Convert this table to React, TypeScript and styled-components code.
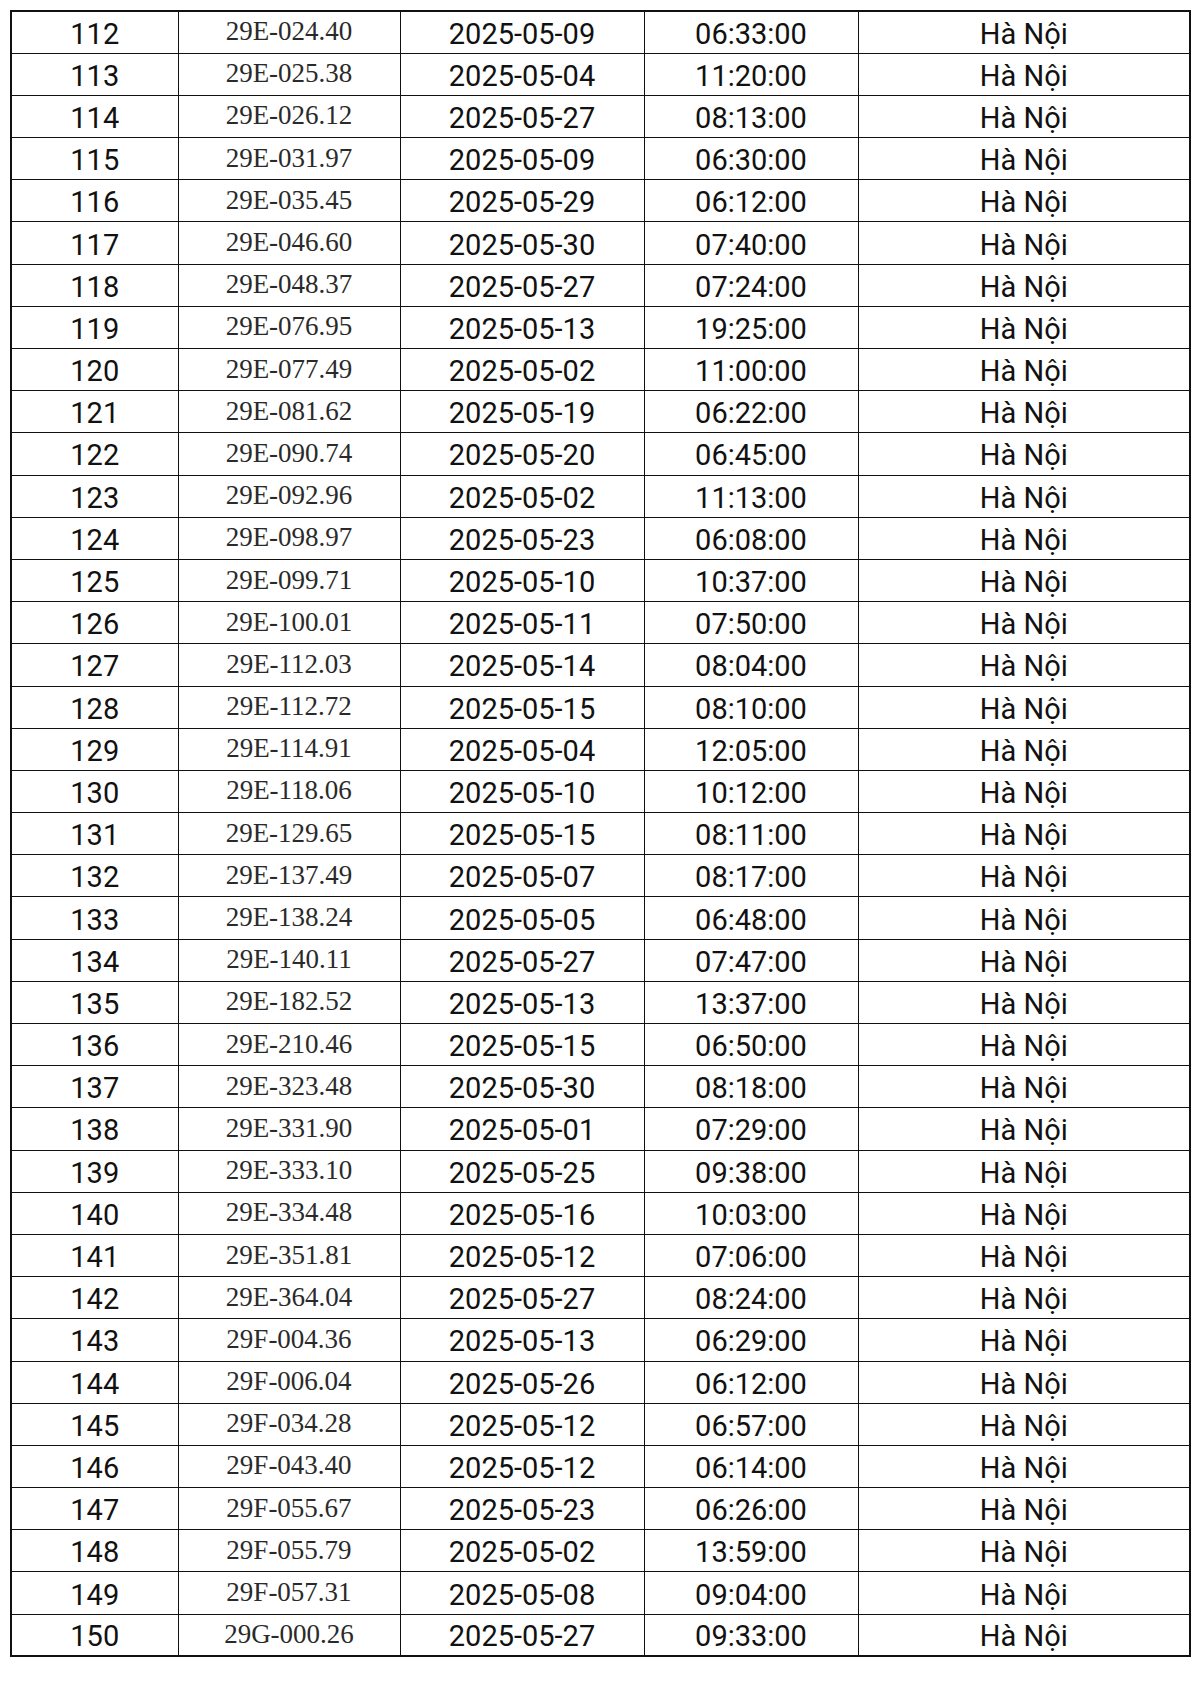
import React from "react";
import styled, { createGlobalStyle } from "styled-components";

const GlobalStyle = createGlobalStyle`
  html, body {
    margin: 0;
    padding: 0;
    background: #ffffff;
  }
  body {
    font-family: Roboto, "Liberation Sans", Arial, sans-serif;
    color: #111;
  }
`;

const Page = styled.div`
  width: 1200px;
  height: 1688px;
  padding: 10px 0 0 10px;
  box-sizing: border-box;
  background: #fff;
`;

const Table = styled.table`
  width: 1179px;
  border-collapse: collapse;
  table-layout: fixed;
  border: 2px solid #111;
`;

const Row = styled.tr`
  height: 42.2px;
`;

const Cell = styled.td<{ $serif?: boolean }>`
  border: 1.5px solid #111;
  padding: ${(p) => (p.$serif ? "0 0 1px 0" : "4px 0 0 0")};
  text-align: center;
  vertical-align: middle;
  white-space: nowrap;
  font-family: ${(p) =>
    p.$serif
      ? `"Liberation Serif", "Times New Roman", serif`
      : `Roboto, "Liberation Sans", Arial, sans-serif`};
  font-size: ${(p) => (p.$serif ? "27px" : "29px")};
  color: ${(p) => (p.$serif ? "#2a2a2a" : "#111")};
  line-height: 1;
`;

const widths = [167, 222, 244, 214, 332];

const rows: [string, string, string][] = [
  ["29E-024.40", "2025-05-09", "06:33:00"],
  ["29E-025.38", "2025-05-04", "11:20:00"],
  ["29E-026.12", "2025-05-27", "08:13:00"],
  ["29E-031.97", "2025-05-09", "06:30:00"],
  ["29E-035.45", "2025-05-29", "06:12:00"],
  ["29E-046.60", "2025-05-30", "07:40:00"],
  ["29E-048.37", "2025-05-27", "07:24:00"],
  ["29E-076.95", "2025-05-13", "19:25:00"],
  ["29E-077.49", "2025-05-02", "11:00:00"],
  ["29E-081.62", "2025-05-19", "06:22:00"],
  ["29E-090.74", "2025-05-20", "06:45:00"],
  ["29E-092.96", "2025-05-02", "11:13:00"],
  ["29E-098.97", "2025-05-23", "06:08:00"],
  ["29E-099.71", "2025-05-10", "10:37:00"],
  ["29E-100.01", "2025-05-11", "07:50:00"],
  ["29E-112.03", "2025-05-14", "08:04:00"],
  ["29E-112.72", "2025-05-15", "08:10:00"],
  ["29E-114.91", "2025-05-04", "12:05:00"],
  ["29E-118.06", "2025-05-10", "10:12:00"],
  ["29E-129.65", "2025-05-15", "08:11:00"],
  ["29E-137.49", "2025-05-07", "08:17:00"],
  ["29E-138.24", "2025-05-05", "06:48:00"],
  ["29E-140.11", "2025-05-27", "07:47:00"],
  ["29E-182.52", "2025-05-13", "13:37:00"],
  ["29E-210.46", "2025-05-15", "06:50:00"],
  ["29E-323.48", "2025-05-30", "08:18:00"],
  ["29E-331.90", "2025-05-01", "07:29:00"],
  ["29E-333.10", "2025-05-25", "09:38:00"],
  ["29E-334.48", "2025-05-16", "10:03:00"],
  ["29E-351.81", "2025-05-12", "07:06:00"],
  ["29E-364.04", "2025-05-27", "08:24:00"],
  ["29F-004.36", "2025-05-13", "06:29:00"],
  ["29F-006.04", "2025-05-26", "06:12:00"],
  ["29F-034.28", "2025-05-12", "06:57:00"],
  ["29F-043.40", "2025-05-12", "06:14:00"],
  ["29F-055.67", "2025-05-23", "06:26:00"],
  ["29F-055.79", "2025-05-02", "13:59:00"],
  ["29F-057.31", "2025-05-08", "09:04:00"],
  ["29G-000.26", "2025-05-27", "09:33:00"],
];

export default function App() {
  return (
    <>
      <GlobalStyle />
      <Page>
        <Table>
          <colgroup>
            {widths.map((w, i) => (
              <col key={i} style={{ width: w }} />
            ))}
          </colgroup>
          <tbody>
            {rows.map(([plate, date, time], i) => (
              <Row key={plate}>
                <Cell>{112 + i}</Cell>
                <Cell $serif>{plate}</Cell>
                <Cell>{date}</Cell>
                <Cell>{time}</Cell>
                <Cell>Hà Nội</Cell>
              </Row>
            ))}
          </tbody>
        </Table>
      </Page>
    </>
  );
}
